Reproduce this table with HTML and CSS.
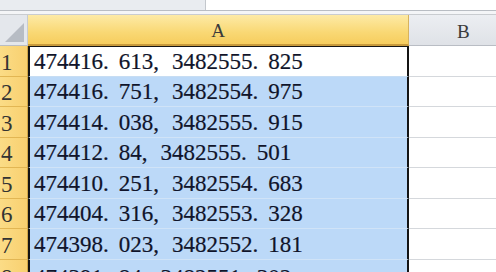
FILE: index.html
```html
<!DOCTYPE html>
<html>
<head>
<meta charset="utf-8">
<link rel="stylesheet" href="styles.css">
</head>
<body>
<div class="topbar">
  <div class="namebox"></div>
  <div class="formula"></div>
</div>
<div class="gap"></div>
<div class="sheet">
  <div class="corner"><span class="tri"></span></div>
  <div class="colhead colA">A</div>
  <div class="colhead colB">B</div>

  <div class="rowhead">1</div>
  <div class="cell a first">474416<span class="p">.</span>613<span class="c">,</span>3482555<span class="p">.</span>825</div>
  <div class="cell b"></div>

  <div class="rowhead">2</div>
  <div class="cell a sel">474416<span class="p">.</span>751<span class="c">,</span>3482554<span class="p">.</span>975</div>
  <div class="cell b"></div>

  <div class="rowhead">3</div>
  <div class="cell a sel">474414<span class="p">.</span>038<span class="c">,</span>3482555<span class="p">.</span>915</div>
  <div class="cell b"></div>

  <div class="rowhead">4</div>
  <div class="cell a sel">474412<span class="p">.</span>84<span class="c">,</span>3482555<span class="p">.</span>501</div>
  <div class="cell b"></div>

  <div class="rowhead">5</div>
  <div class="cell a sel">474410<span class="p">.</span>251<span class="c">,</span>3482554<span class="p">.</span>683</div>
  <div class="cell b"></div>

  <div class="rowhead">6</div>
  <div class="cell a sel">474404<span class="p">.</span>316<span class="c">,</span>3482553<span class="p">.</span>328</div>
  <div class="cell b"></div>

  <div class="rowhead">7</div>
  <div class="cell a sel">474398<span class="p">.</span>023<span class="c">,</span>3482552<span class="p">.</span>181</div>
  <div class="cell b"></div>
</div>
<div class="sheet partial">
  <div class="rowhead">8</div>
  <div class="cell a sel">474391<span class="p">.</span>84<span class="c">,</span>3482551<span class="p">.</span>302</div>
  <div class="cell b"></div>
</div>
</body>
</html>
```
FILE: styles.css
```css
html, body {
  margin: 0;
  padding: 0;
  width: 496px;
  height: 272px;
  overflow: hidden;
  background: #ffffff;
}

.topbar {
  display: flex;
  height: 10px;
  border-bottom: 1px solid #b9bdc3;
}

.namebox {
  width: 205px;
  background: #e9ecf0;
  border-right: 1px solid #c3c7cc;
}

.formula {
  flex: 1;
  background: #ffffff;
}

.gap {
  height: 3px;
  background: #f4f5f7;
  border-bottom: 1px solid #c9ccd0;
}

.sheet {
  display: grid;
  grid-template-columns: 28px 381px 1fr;
  grid-template-rows: 31px repeat(7, 30.5px);
  font-family: "Liberation Serif", "Times New Roman", serif;
}

.sheet.partial {
  grid-template-rows: 13px;
  overflow: hidden;
}

.partial .cell,
.partial .rowhead {
  align-items: flex-start;
  padding-top: 6px;
  padding-bottom: 0;
}

.corner {
  position: relative;
  background: #e4e7ec;
  border-right: 1px solid #c7cbd1;
  border-bottom: 1px solid #b9bdc4;
  box-sizing: border-box;
}

.tri {
  position: absolute;
  right: 3px;
  bottom: 3px;
  width: 0;
  height: 0;
  border-left: 19px solid transparent;
  border-bottom: 19px solid #b7bcc4;
}

.colhead {
  box-sizing: border-box;
  display: flex;
  align-items: center;
  justify-content: center;
  font-size: 19px;
  color: #3a3a3a;
  padding-top: 3px;
}

.colA {
  background: linear-gradient(#fdeaa6, #f9d874 60%, #f6cd5e);
  border-bottom: 2px solid #c89a3c;
  border-right: 1px solid #d7b35e;
}

.colB {
  background: linear-gradient(#eceef2, #dfe2e7);
  border-bottom: 1px solid #b9bdc4;
  justify-content: flex-start;
  padding-left: 48px;
}

.rowhead {
  box-sizing: border-box;
  background: linear-gradient(90deg, #fbdc86, #f8d070);
  border-right: 1px solid #d0a546;
  border-bottom: 1px solid #e2b653;
  font-size: 23px;
  color: #333333;
  padding-left: 1px;
  display: flex;
  align-items: flex-end;
  padding-bottom: 2px;
  line-height: 1;
}

.cell {
  box-sizing: border-box;
  border-bottom: 1px solid #d5d8dc;
  display: flex;
  align-items: flex-end;
  white-space: nowrap;
  overflow: hidden;
  line-height: 1;
}

.a {
  border-left: 2px solid #141414;
  border-right: 2px solid #141414;
  font-size: 23px;
  color: #10142a;
  -webkit-text-stroke: 0.2px #10142a;
  padding-left: 4px;
  padding-bottom: 3px;
}

.first {
  background: #ffffff;
  border-top: 1px solid #141414;
  border-bottom: 1px solid #c7ddf3;
}

.sel {
  background: #bcd9f8;
  border-bottom: 1px solid #d0e3f7;
}

.b {
  background: #ffffff;
}

.p {
  margin-right: 10px;
}

.c {
  margin-right: 13px;
}
```
